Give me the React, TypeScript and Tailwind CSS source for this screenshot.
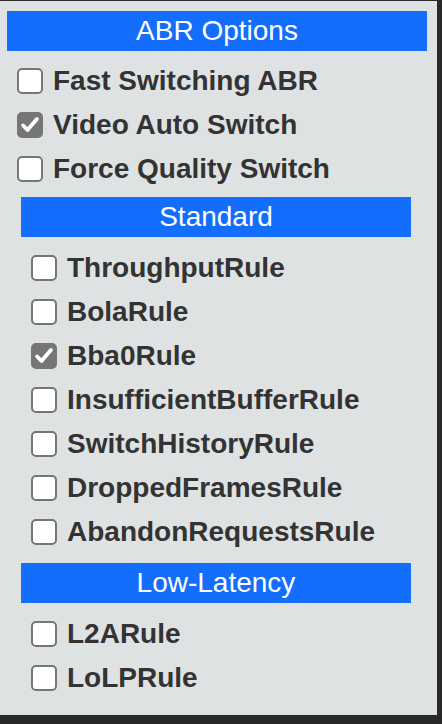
import { useState } from 'react'

type Rule = { id: string; label: string }

const topOptions: Rule[] = [
  { id: 'fast', label: 'Fast Switching ABR' },
  { id: 'auto', label: 'Video Auto Switch' },
  { id: 'force', label: 'Force Quality Switch' },
]

const standardRules: Rule[] = [
  { id: 'throughput', label: 'ThroughputRule' },
  { id: 'bola', label: 'BolaRule' },
  { id: 'bba0', label: 'Bba0Rule' },
  { id: 'insufficient', label: 'InsufficientBufferRule' },
  { id: 'history', label: 'SwitchHistoryRule' },
  { id: 'dropped', label: 'DroppedFramesRule' },
  { id: 'abandon', label: 'AbandonRequestsRule' },
]

const lowLatencyRules: Rule[] = [
  { id: 'l2a', label: 'L2ARule' },
  { id: 'lolp', label: 'LoLPRule' },
]

const Header = ({ title }: { title: string }) => (
  <div className="h-[40px] bg-[#136dfd] text-center text-[28px] leading-[40px] text-white">
    {title}
  </div>
)

const CheckRow = ({
  label,
  checked,
  onToggle,
}: {
  label: string
  checked: boolean
  onToggle: () => void
}) => (
  <label
    className="flex h-[44px] cursor-pointer items-center gap-[10px] pl-[10px]"
    onClick={onToggle}
  >
    <span
      className={`flex h-[26px] w-[26px] shrink-0 items-center justify-center rounded-[5px] border-2 border-[#767676] ${
        checked ? 'bg-[#767676]' : 'bg-white'
      }`}
    >
      {checked && (
        <svg viewBox="0 0 24 24" className="h-[22px] w-[22px]" fill="none">
          <path
            d="M4.5 12.5l4.8 5L19.5 5.5"
            stroke="white"
            strokeWidth="4.2"
            strokeLinecap="round"
            strokeLinejoin="round"
          />
        </svg>
      )}
    </span>
    <span className="text-[28px] font-bold leading-none text-[#333333]">{label}</span>
  </label>
)

export default function App() {
  const [checked, setChecked] = useState<Record<string, boolean>>({ auto: true, bba0: true })
  const toggle = (id: string) => setChecked(c => ({ ...c, [id]: !c[id] }))

  return (
    <div
      className="h-[724px] w-[442px] overflow-hidden bg-[#292929] pt-px"
      style={{ fontFamily: '"Liberation Sans", Arial, sans-serif' }}
    >
      <div className="h-[714px] w-[437px] bg-[#dfe2e3] pl-[7px] pr-[10px] pt-[10px]">
        <Header title="ABR Options" />

        <div className="mt-[8px]">
          {topOptions.map(o => (
            <CheckRow key={o.id} label={o.label} checked={!!checked[o.id]} onToggle={() => toggle(o.id)} />
          ))}
        </div>

        <div className="ml-[14px] mr-[16px] mt-[6px]">
          <Header title="Standard" />
          <div className="mt-[9px]">
            {standardRules.map(r => (
              <CheckRow key={r.id} label={r.label} checked={!!checked[r.id]} onToggle={() => toggle(r.id)} />
            ))}
          </div>

          <div className="mt-[9px]">
            <Header title="Low-Latency" />
          </div>
          <div className="mt-[9px]">
            {lowLatencyRules.map(r => (
              <CheckRow key={r.id} label={r.label} checked={!!checked[r.id]} onToggle={() => toggle(r.id)} />
            ))}
          </div>
        </div>
      </div>
    </div>
  )
}
